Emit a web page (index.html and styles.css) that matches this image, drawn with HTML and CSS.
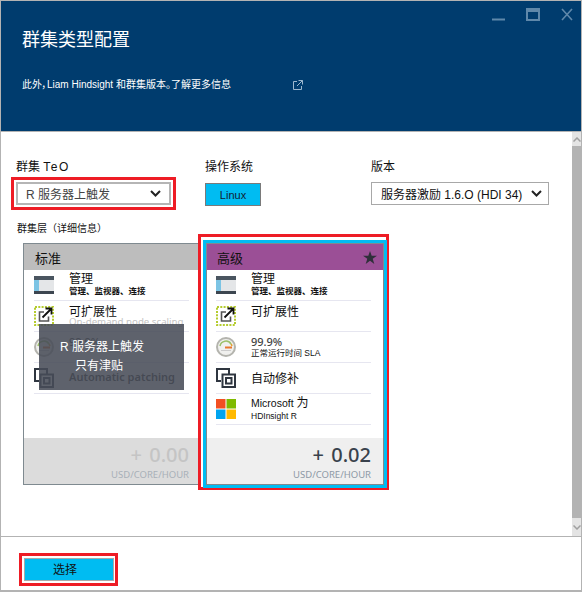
FILE: index.html
```html
<!DOCTYPE html>
<html lang="zh-cn">
<head>
  <meta charset="utf-8">
  <title>群集类型配置</title>
  <link rel="stylesheet" href="styles.css">
</head>
<body>
  <div class="window">
    <header class="blade-header">
      <div class="window-controls">
        <svg width="13" height="13" viewBox="0 0 13 13"><path d="M0 11.5h13" stroke="#5f88aa" stroke-width="2"/></svg>
        <svg width="14" height="13" viewBox="0 0 14 13"><path d="M1 1h12v11H1z M1 3h12" fill="none" stroke="#5f88aa" stroke-width="2"/></svg>
        <svg width="12" height="13" viewBox="0 0 12 13"><path d="M1 1l10 11M11 1L1 12" fill="none" stroke="#5f88aa" stroke-width="1.6"/></svg>
      </div>
      <h1>群集类型配置</h1>
      <p class="blade-desc">
        <span>此外，Liam Hindsight 和群集版本。了解更多信息</span>
        <svg width="10" height="10" viewBox="0 0 10 10"><path d="M4 1.5H.5v8h8V6M5.5.5h4v4M9.500.5L4 6" fill="none" stroke="#9db8cf" stroke-width="1"/></svg>
      </p>
    </header>

    <div class="blade-body">
      <main class="content">
        <div class="fields">
          <div class="field">
            <label class="field-label label-inset">群集 <span class="teo">TeO</span></label>
            <div class="highlight">
              <div class="dropdown dropdown-muted">
                <span>R 服务器上触发</span>
                <svg class="chevron" width="11" height="7" viewBox="0 0 11 7"><path d="M1 1l4.500 4.500L10 1" fill="none" stroke="#222" stroke-width="2"/></svg>
              </div>
            </div>
          </div>
          <div class="field">
            <label class="field-label">操作系统</label>
            <div class="os-button">Linux</div>
          </div>
          <div class="field">
            <label class="field-label">版本</label>
            <div class="dropdown version">
              <span>服务器激励 1.6.O (HDI 34)</span>
              <svg class="chevron" width="11" height="7" viewBox="0 0 11 7"><path d="M1 1l4.500 4.500L10 1" fill="none" stroke="#222" stroke-width="2"/></svg>
            </div>
          </div>
        </div>

        <div class="tier-label">群集层（详细信息）</div>

        <div class="tiers">
          <section class="card card-standard">
            <div class="card-head">标准</div>
            <div class="card-rows">
              <div class="row">
                <svg class="row-icon" viewBox="0 0 20 20"><use href="#i-manage"/></svg>
                <div class="row-text"><div class="row-title">管理</div><div class="row-sub tight">管理、监视器、连接</div></div>
              </div>
              <div class="row">
                <svg class="row-icon" viewBox="0 0 20 20"><use href="#i-scale"/></svg>
                <div class="row-text"><div class="row-title big">可扩展性</div><div class="row-sub faded">On-demand node scaling</div></div>
              </div>
              <div class="row">
                <svg class="row-icon" viewBox="0 0 20 20"><use href="#i-gauge"/></svg>
                <div class="row-text"><div class="row-title pct">99.9%</div></div>
              </div>
              <div class="row">
                <svg class="row-icon" viewBox="0 0 20 20"><use href="#i-patch"/></svg>
                <div class="row-text"><div class="row-title patching">Automatic patching</div></div>
              </div>
            </div>
            <div class="card-foot foot-off">
              <div class="price">+ 0.00</div>
              <div class="unit">USD/CORE/HOUR</div>
            </div>
            <div class="card-notice">
              <div class="notice-first">R 服务器上触发</div>
              <div class="notice-second">只有津贴</div>
            </div>
          </section>

          <div class="highlight highlight-card">
            <section class="card card-premium">
              <div class="card-head">
                <span>高级</span>
                <svg width="14" height="13" viewBox="0 0 14 13"><path d="M7 0l1.700 4.700H14L9.700 7.800 11.300 13 7 9.800 2.700 13l1.600-5.200L0 4.700h5.300z" fill="#2f2f3a"/></svg>
              </div>
              <div class="card-rows">
                <div class="row">
                  <svg class="row-icon" viewBox="0 0 20 20"><use href="#i-manage"/></svg>
                  <div class="row-text"><div class="row-title">管理</div><div class="row-sub tight">管理、监视器、连接</div></div>
                </div>
                <div class="row">
                  <svg class="row-icon" viewBox="0 0 20 20"><use href="#i-scale"/></svg>
                  <div class="row-text"><div class="row-title big">可扩展性</div></div>
                </div>
                <div class="row">
                  <svg class="row-icon" viewBox="0 0 20 20"><use href="#i-gauge"/></svg>
                  <div class="row-text"><div class="row-title pct">99.9%</div><div class="row-sub thin">正常运行时间 SLA</div></div>
                </div>
                <div class="row">
                  <svg class="row-icon" viewBox="0 0 20 20"><use href="#i-patch"/></svg>
                  <div class="row-text"><div class="row-title big mid">自动修补</div></div>
                </div>
                <div class="row">
                  <svg class="row-icon" viewBox="0 0 20 20"><use href="#i-ms"/></svg>
                  <div class="row-text"><div class="row-title ms">Microsoft <span class="ms-cjk">为</span></div><div class="row-sub thin">HDInsight R</div></div>
                </div>
              </div>
              <div class="card-foot">
                <div class="price">+ 0.02</div>
                <div class="unit">USD/CORE/HOUR</div>
              </div>
            </section>
          </div>
        </div>
      </main>

      <div class="scrollbar">
        <div class="scroll-arrow">
          <svg width="8" height="5" viewBox="0 0 8 5"><path d="M.5 4.500L4 1l3.500 3.500" fill="none" stroke="#a0a0a0" stroke-width="1.500"/></svg>
        </div>
        <div class="scroll-track"></div>
        <div class="scroll-arrow arrow-bottom">
          <svg width="8" height="5" viewBox="0 0 8 5"><path d="M.5.5L4 4 7.500.5" fill="none" stroke="#a0a0a0" stroke-width="1.500"/></svg>
        </div>
      </div>
    </div>

    <footer class="blade-footer">
      <div class="highlight">
        <button class="select-button">选择</button>
      </div>
    </footer>
  </div>

  <svg class="icon-defs" width="0" height="0">
    <symbol id="i-manage" viewBox="0 0 20 20">
      <path d="M0 1h20v4H0z" fill="#4a5560"/>
      <path d="M0 5h5v11H0z" fill="#7cc4e4"/>
      <path d="M5 5h15v11H5z" fill="#e4e6e8"/>
      <path d="M0 16h20v3H0z" fill="#3d4650"/>
    </symbol>
    <symbol id="i-scale" viewBox="0 0 20 20">
      <rect x="1" y="1" width="18" height="18" fill="none" stroke="#b5cc2e" stroke-width="2" stroke-dasharray="2 1.300"/>
      <path d="M10 6H5.500v9h9v-4.500" fill="none" stroke="#555" stroke-width="1.600"/>
      <path d="M8.500 11.500L17 3M11.500 2.500H17.500V8.500" fill="none" stroke="#111" stroke-width="1.800"/>
    </symbol>
    <symbol id="i-gauge" viewBox="0 0 20 20">
      <circle cx="10" cy="10" r="9" fill="#f0f0ee" stroke="#b4b4ae" stroke-width="2"/>
      <path d="M4 9a6 6 0 0 1 11-2" fill="none" stroke="#9cc069" stroke-width="1.500"/>
      <path d="M15 7a6 6 0 0 1 1 2" fill="none" stroke="#e0a030" stroke-width="1.500"/>
      <path d="M9 10.500h7" stroke="#e8772e" stroke-width="2"/>
      <path d="M5 13.500h10" stroke="#ccc" stroke-width="1"/>
    </symbol>
    <symbol id="i-patch" viewBox="0 0 20 20">
      <path d="M5 13H1V1h12v5" fill="none" stroke="#2f3640" stroke-width="2"/>
      <path d="M6.500 6.500h12.500v12.500H6.500z M10 10h5.500v5.500H10z" fill="none" stroke="#2f3640" stroke-width="2"/>
    </symbol>
    <symbol id="i-ms" viewBox="0 0 20 20">
      <path d="M0 0h9.500v9.500H0z" fill="#f25022"/>
      <path d="M10.500 0H20v9.500h-9.500z" fill="#7fba00"/>
      <path d="M0 10.500h9.500V20H0z" fill="#00a4ef"/>
      <path d="M10.500 10.500H20V20h-9.500z" fill="#ffb900"/>
    </symbol>
  </svg>
</body>
</html>
```

FILE: styles.css
```css
:root {
  --border-gray: #b3b3b3;
  --header-blue: #003c6e;
  --accent: #00bcf2;
  --red: #ee1c25;
  --line: #e6e6f0;
  --sans: "Liberation Sans", "Noto Sans CJK SC", sans-serif;
  --soft: "Noto Sans", "Noto Sans CJK SC", sans-serif;
}
* {
  box-sizing: border-box;
}
body {
  margin: 0;
  background: #fff;
  font-family: var(--sans);
  color: #111;
}
.window {
  display: flex;
  flex-direction: column;
  width: 582px;
  height: 592px;
  border: 1px solid var(--border-gray);
  border-bottom-width: 2px;
  overflow: hidden;
}
.icon-defs {
  position: absolute;
}

/* header */
.blade-header {
  flex: none;
  height: 131px;
  padding: 7px 8px 0 21px;
  background: var(--header-blue);
  border-bottom: 1px solid var(--border-gray);
  color: #fff;
}
.window-controls {
  display: flex;
  justify-content: flex-end;
  align-items: flex-start;
  gap: 21px;
}
.blade-header h1 {
  margin: 7px 0 0;
  font-size: 18px;
  font-weight: 400;
  line-height: 24px;
}
.blade-desc {
  display: flex;
  align-items: center;
  margin: 25px 0 0;
  font-size: 10px;
  font-feature-settings: "palt";
  line-height: 16px;
}
.blade-desc span {
  width: 271px;
}

/* scrolling middle part */
.blade-body {
  flex: 1;
  display: flex;
  min-height: 0;
}
.content {
  flex: 1;
  padding: 27px 0 0 10px;
}
.scrollbar {
  flex: none;
  display: flex;
  flex-direction: column;
  width: 9px;
  background: var(--border-gray);
}
.scroll-track {
  flex: 1;
}
.scroll-arrow {
  display: flex;
  justify-content: center;
  align-items: center;
  height: 14px;
  background: #e4e4e4;
}
.arrow-bottom {
  height: 18px;
}

/* form fields */
.fields {
  display: grid;
  grid-template-columns: 194px 166px 178px;
}
.field-label {
  display: block;
  height: 17px;
  font-size: 12px;
  line-height: 17px;
}
.label-inset {
  margin-left: 5px;
}
.teo {
  letter-spacing: 1.500px;
}
.highlight {
  border: 3px solid var(--red);
  padding: 2px;
  background: #fff;
}
.dropdown {
  display: flex;
  justify-content: space-between;
  align-items: center;
  height: 23px;
  padding: 0 10px 0 9px;
  border: 1px solid #a8a8a8;
  font-size: 12px;
  white-space: nowrap;
}
.dropdown-muted span {
  color: #444;
}
.dropdown-muted {
  border-width: 2px;
  border-color: #b5b5b5;
  padding: 0 8px;
}
.fields .highlight {
  width: 165px;
  margin-top: 1px;
}
.version {
  margin-top: 6px;
  width: 178px;
  padding-right: 6px;
}
.os-button {
  display: flex;
  justify-content: center;
  align-items: center;
  width: 56px;
  height: 23px;
  margin-top: 7px;
  background: var(--accent);
  border: 1px solid #7a7a7a;
  font-size: 11px;
  color: #123;
}
.tier-label {
  margin: 11px 0 0 6px;
  height: 16px;
  font-size: 10px;
  line-height: 16px;
}

/* tier cards */
.tiers {
  display: flex;
  align-items: flex-start;
  margin: -3px 0 0 12px;
}
.card {
  display: flex;
  flex-direction: column;
  border: 1px solid #7f8a90;
  background: #fff;
}
.card-standard {
  position: relative;
  width: 175px;
  height: 242px;
  margin-top: 9px;
  border-right: none;
}
.card-premium {
  width: 178px;
  height: 242px;
}
.highlight-card {
  padding: 1px;
  height: 256px;
  width: 191px;
  border-color: var(--red);
  background: #fff;
}
.highlight-card .card {
  outline: 3px solid var(--accent);
  margin: 5px 0 0 4px;
}
.card-head {
  display: flex;
  justify-content: space-between;
  align-items: center;
  flex: none;
  height: 26px;
  padding: 0 6px 0 11px;
  background: #bdbdbd;
  font-size: 13px;
}
.card-premium .card-head {
  padding-left: 10px;
  background: #9b4f96;
  color: #111;
}
.card-rows {
  flex: 1;
  padding: 0 12px 0 9px;
}
.card-standard .card-rows {
  padding: 0 9px 0 10px;
}
.row {
  display: flex;
  height: 31px;
  border-bottom: 1px solid var(--line);
}
.row-icon {
  flex: none;
  width: 20px;
  height: 20px;
  margin: 5px 15px 0 0;
}
.row-text {
  min-width: 0;
  padding-top: 1px;
  white-space: nowrap;
}
.row-title {
  font-size: 12px;
  line-height: 16px;
}
.row-title.big {
  padding-top: 2px;
}
.row-title.mid {
  padding-top: 7px;
}
.row-title.pct {
  padding-top: 2px;
  font-family: var(--soft);
  font-size: 11px;
  font-weight: 500;
  line-height: 13px;
  color: #444;
}
.row-title.ms {
  font-size: 10.500px;
}
.ms-cjk {
  font-size: 12px;
}
.row-title.patching {
  padding-top: 5px;
  font-family: var(--soft);
  font-size: 11px;
  font-weight: 600;
  color: #333;
}
.row-sub {
  font-size: 8.500px;
  line-height: 11px;
  font-weight: 700;
}
.row-sub.tight {
  margin-top: -1px;
}
.row-sub.thin {
  font-weight: 400;
}
.row-sub.faded {
  margin-top: -3px;
  font-family: var(--soft);
  font-size: 9.700px;
  line-height: 10px;
  font-weight: 400;
  color: #c4c4c4;
}
.card-foot {
  flex: none;
  height: 46px;
  padding: 0 12px 0 0;
  background: #efefef;
  font-family: var(--soft);
  text-align: right;
}
.price {
  padding-top: 3px;
  font-size: 20px;
  font-weight: 500;
  word-spacing: 2px;
  line-height: 28px;
  color: #39424c;
}
.unit {
  font-size: 9.500px;
  line-height: 12px;
  color: #8d99a6;
}
.foot-off {
  padding-right: 9px;
  background: #dcdcdc;
}
.foot-off .price {
  color: #c4c4c4;
}
.foot-off .unit {
  color: #a8b0b8;
}
.card-notice {
  position: absolute;
  top: 80px;
  left: 15px;
  width: 145px;
  height: 66px;
  padding-top: 14px;
  background: rgba(72, 76, 88, 0.88);
  color: #fff;
  font-size: 12px;
  line-height: 19px;
}
.notice-first {
  padding-left: 21px;
}
.notice-second {
  padding-left: 36px;
}

/* footer */
.blade-footer {
  flex: none;
  height: 54px;
  padding: 16px 0 0 18px;
  border-top: 1px solid var(--border-gray);
}
.blade-footer .highlight {
  width: 99px;
  height: 33px;
}
.select-button {
  display: block;
  width: 90px;
  height: 23px;
  padding: 0 8px 2px 0;
  border: 1px solid #aaa;
  background: var(--accent);
  font-family: inherit;
  font-size: 12px;
  color: #111;
}
```
